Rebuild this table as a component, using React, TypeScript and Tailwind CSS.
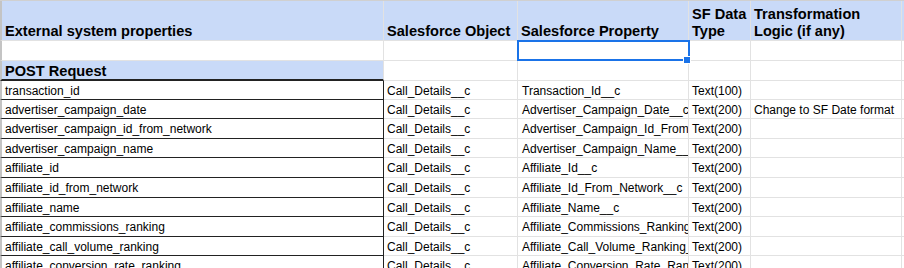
import React from "react";

const rows: [string, string, string, string, string, number][] = [
  ["transaction_id", "Call_Details__c", "Transaction_Id__c", "Text(100)", "", 19],
  ["advertiser_campaign_date", "Call_Details__c", "Advertiser_Campaign_Date__c", "Text(200)", "Change to SF Date format", 19],
  ["advertiser_campaign_id_from_network", "Call_Details__c", "Advertiser_Campaign_Id_From_Network__c", "Text(200)", "", 20],
  ["advertiser_campaign_name", "Call_Details__c", "Advertiser_Campaign_Name__c", "Text(200)", "", 19],
  ["affiliate_id", "Call_Details__c", "Affiliate_Id__c", "Text(200)", "", 20],
  ["affiliate_id_from_network", "Call_Details__c", "Affiliate_Id_From_Network__c", "Text(200)", "", 20],
  ["affiliate_name", "Call_Details__c", "Affiliate_Name__c", "Text(200)", "", 19],
  ["affiliate_commissions_ranking", "Call_Details__c", "Affiliate_Commissions_Ranking__c", "Text(200)", "", 20],
  ["affiliate_call_volume_ranking", "Call_Details__c", "Affiliate_Call_Volume_Ranking__c", "Text(200)", "", 19],
  ["affiliate_conversion_rate_ranking", "Call_Details__c", "Affiliate_Conversion_Rate_Ranking__c", "Text(200)", "", 20],
];

const font = { fontFamily: '"Liberation Sans", Arial, sans-serif' };

export default function App() {
  return (
    <div className="w-[904px] h-[268px] overflow-hidden bg-white text-black" style={font}>
      {/* Header row */}
      <div className="flex h-[41px] bg-[#c9daf8] border-t border-[#d0d0d0] text-[14.6px] font-bold leading-[17px]">
        <div className="w-[384px] shrink-0 border-l-2 border-l-[#c4c4c4] border-r border-b border-[#e2e2e2] flex items-end px-[3px]">
          External system properties
        </div>
        <div className="w-[134px] shrink-0 border-r border-b border-[#e2e2e2] flex items-end px-[3px] whitespace-nowrap overflow-hidden">
          Salesforce Object
        </div>
        <div className="w-[171px] shrink-0 border-r border-b border-[#e2e2e2] flex items-end px-[3px] whitespace-nowrap overflow-hidden">
          Salesforce Property
        </div>
        <div className="w-[62px] shrink-0 border-r border-b border-[#e2e2e2] flex items-end px-[3px]">
          SF Data Type
        </div>
        <div className="w-[151px] shrink-0 border-r border-b border-[#e2e2e2] flex items-end px-[3px]">
          Transformation Logic (if any)
        </div>
        <div className="flex-1 border-b border-[#e2e2e2]" />
      </div>

      {/* Empty row with selected cell */}
      <div className="flex h-[20px]">
        <div className="w-[384px] shrink-0 border-l-2 border-l-[#c4c4c4] border-r border-b border-[#e2e2e2]" />
        <div className="w-[134px] shrink-0 border-r border-b border-[#e2e2e2]" />
        <div className="relative w-[171px] shrink-0 border-r border-b border-[#e2e2e2]">
          <div className="absolute left-[-1px] top-[-1px] w-[173px] h-[21px] border-2 border-[#1a73e8]" />
          <div className="absolute left-[166px] top-[16px] w-[6px] h-[6px] bg-[#1a73e8] border border-white box-content -m-px" />
        </div>
        <div className="w-[62px] shrink-0 border-r border-b border-[#e2e2e2]" />
        <div className="w-[151px] shrink-0 border-r border-b border-[#e2e2e2]" />
        <div className="flex-1 border-b border-[#e2e2e2]" />
      </div>

      {/* POST Request row */}
      <div className="flex h-[20px] text-[14.6px] font-bold leading-[13px]">
        <div className="w-[384px] shrink-0 bg-[#c9daf8] border-l-2 border-l-[#c4c4c4] border-r border-r-[#e2e2e2] border-b-2 border-b-[#222] flex items-end px-[3px] pb-[1px]">
          POST Request
        </div>
        <div className="w-[134px] shrink-0 border-r border-b border-[#e2e2e2]" />
        <div className="w-[171px] shrink-0 border-r border-b border-[#e2e2e2]" />
        <div className="w-[62px] shrink-0 border-r border-b border-[#e2e2e2]" />
        <div className="w-[151px] shrink-0 border-r border-b border-[#e2e2e2]" />
        <div className="flex-1 border-b border-[#e2e2e2]" />
      </div>

      {rows.map(([a, b, c, d, e, h], i) => (
        <div key={i} className="flex text-[12px] leading-[15px]" style={{ height: h }}>
          <div className="w-[384px] shrink-0 border-l-2 border-l-[#c4c4c4] border-r border-r-[#222] border-b border-b-[#222] flex items-center pt-[2px] px-[3px] whitespace-nowrap overflow-hidden">
            {a}
          </div>
          <div className="w-[134px] shrink-0 border-r border-b border-[#e2e2e2] flex items-center pt-[2px] px-[3px] whitespace-nowrap overflow-hidden">
            {b}
          </div>
          <div className="w-[171px] shrink-0 border-r border-b border-[#e2e2e2] flex items-center pt-[2px] pl-[4px] whitespace-nowrap overflow-hidden">
            {c}
          </div>
          <div className="w-[62px] shrink-0 border-r border-b border-[#e2e2e2] flex items-center pt-[2px] px-[3px] whitespace-nowrap overflow-hidden">
            {d}
          </div>
          <div className="w-[151px] shrink-0 border-r border-b border-[#e2e2e2] flex items-center pt-[2px] px-[3px] whitespace-nowrap overflow-hidden">
            {e}
          </div>
          <div className="flex-1 border-b border-[#e2e2e2]" />
        </div>
      ))}
    </div>
  );
}
